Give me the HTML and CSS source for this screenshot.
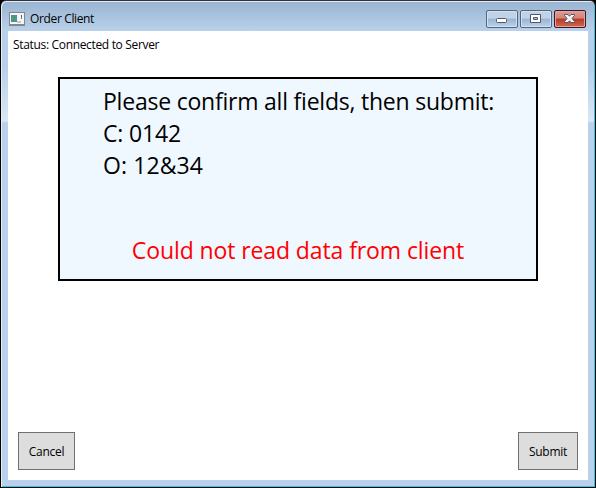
FILE: index.html
```html
<!DOCTYPE html>
<html lang="en">
<head>
<meta charset="utf-8">
<title>Order Client</title>
<link rel="stylesheet" href="styles.css">
</head>
<body>
<div class="window">
  <header class="titlebar">
    <svg class="app-icon" width="16" height="14" viewBox="0 0 16 14" shape-rendering="crispEdges">
      <path fill="#85858a" d="M0 0h16v14H0z"/>
      <path fill="#f5f5f5" d="M1 1h14v11H1z"/>
      <path fill="#538bad" d="M2 3h6v7H2z"/>
      <path fill="#4c9a78" d="M3 4h4v5H3z"/>
      <path fill="#c3c8cb" d="M8 9h4v2H8z"/>
      <path fill="#3764b0" d="M12 3h1v2h-1z"/>
      <path fill="#43975c" d="M12 5h1v2h-1z"/>
    </svg>
    <h1 class="title"><span class="title-text">Order Client</span></h1>
    <div class="controls">
      <button class="control" aria-label="Minimize">
        <svg width="32" height="18" viewBox="0 0 32 18"><rect x="10.500" y="8.500" width="10" height="4" rx="1" fill="#fff" stroke="#535666"/></svg>
      </button>
      <button class="control" aria-label="Maximize">
        <svg width="32" height="18" viewBox="0 0 32 18"><path fill="#fff" fill-rule="evenodd" stroke="#535666" d="M10.500 4.500h10v8h-10zM13.500 7.500v2h4v-2z"/></svg>
      </button>
      <button class="control close" aria-label="Close">
        <svg width="32" height="18" viewBox="0 0 32 18"><path fill="#f4f4f4" stroke="#535666" stroke-linejoin="round" d="M10.500 4.500h3.500l1.500 1.700 1.500-1.700h3.500v1L18 8.500l2.500 3v1H17l-1.500-1.700-1.500 1.700h-3.500v-1l2.500-3-2.500-3z"/></svg>
      </button>
    </div>
  </header>
  <main class="client">
    <p class="status"><span class="status-text">Status: Connected to Server</span></p>
    <section class="panel">
      <p class="line"><span class="prompt">Please confirm all fields, then submit:</span></p>
      <p class="line"><span class="customer">C: 0142</span></p>
      <p class="line"><span class="order">O: 12&amp;34</span></p>
      <p class="error"><span class="error-text">Could not read data from client</span></p>
    </section>
    <footer class="actions">
      <button class="action cancel">Cancel</button>
      <button class="action submit">Submit</button>
    </footer>
  </main>
</div>
</body>
</html>
```
FILE: styles.css
```css
* { box-sizing: border-box; }
body {
  margin: 0;
  background: #000;
  font: 12px/16px "Open Sans", "Noto Sans", sans-serif;
  color: #000;
}
h1, p { margin: 0; font-weight: 400; }
.window {
  width: 596px;
  height: 488px;
  padding: 0 7px 7px;
  border: 1px solid #000;
  border-top-color: #342f38;
  border-radius: 6px 6px 0 0;
  box-shadow: inset 1px 1px #e3edf7, inset -1px -1px #24cbe6;
  background:
    linear-gradient(#99b4d1, #b9d1ea) 0 0 / 100% 30px no-repeat,
    linear-gradient(#b9d1ea 30px, #b5d0ea 65px, #dae7f5 120px, #b9d1ea 122px);
}
.titlebar {
  display: flex;
  height: 30px;
  padding: 9px 2px 0 1px;
}
.app-icon { margin-top: 2px; }
.title { margin-left: 5px; font-size: 12px; line-height: 18px; }
.title-text { letter-spacing: -0.36px; }
.controls { display: flex; gap: 2px; margin-left: auto; }
.control {
  width: 32px;
  height: 18px;
  padding: 0;
  border: 1px solid #53657d;
  border-radius: 2px;
  box-shadow: inset 0 0 0 1px #d3e2f1;
  background: linear-gradient(#bfd2e7 0 45%, #98b4d2 50%, #b9d3ea);
}
.control svg { display: block; margin: -1px; }
.close {
  border-color: #431422;
  box-shadow: inset 0 0 0 1px #dfa5a0;
  background: linear-gradient(#dc9e93 0, #d08476 45%, #b93727 50%, #cd6d4c);
}
.client {
  display: flex;
  flex-direction: column;
  width: 580px;
  height: 449px;
  padding: 5px 10px 10px;
  background: #fff;
}
.status { margin-left: -5px; line-height: 18px; }
.status-text { letter-spacing: -0.33px; }
.panel {
  align-self: center;
  width: 480px;
  height: 204px;
  margin-top: 23px;
  padding: 6px 43px 0;
  border: 2px solid #000;
  background: #f0f8ff;
  font-size: 23px;
  line-height: 32px;
  white-space: nowrap;
}
.error { margin-top: 53px; color: #f00; text-align: center; }
.prompt { letter-spacing: -0.22px; }
.customer { letter-spacing: -0.15px; }
.order { letter-spacing: 0.1px; }
.error-text { letter-spacing: -0.1px; }
.actions { display: flex; justify-content: space-between; margin-top: auto; }
.action {
  height: 38px;
  padding: 1px 0 0;
  border: 1px solid #707070;
  background: #ddd;
  color: #000;
  font: inherit;
  letter-spacing: -0.28px;
}
.cancel { width: 57px; }
.submit { width: 60px; }
```
